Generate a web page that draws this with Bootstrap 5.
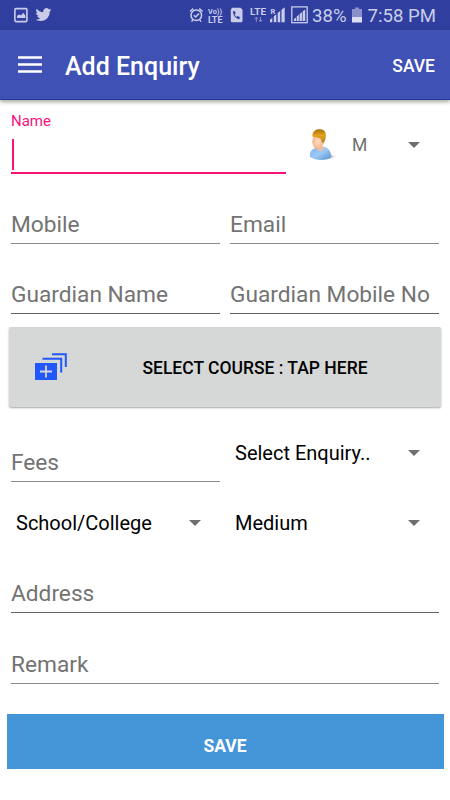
<!DOCTYPE html>
<html lang="en">
<head>
<meta charset="utf-8">
<meta name="viewport" content="width=device-width, initial-scale=1">
<title>Add Enquiry</title>
<link href="https://cdn.jsdelivr.net/npm/bootstrap@5.3.0/dist/css/bootstrap.min.css" rel="stylesheet">
<style>
body{font-family:Roboto,"Liberation Sans",sans-serif;background:#fff;color:#000;width:450px;height:800px;overflow:hidden}
svg{display:block;flex:none}
.status-bar{height:30px;background:#303f9f;color:#c9cdea;font-size:18.6px;line-height:30px;padding:0 14px 0 13px}
.status-text{padding-top:2px}
.battery{margin:0 5px 0 4px}
.app-bar{height:70px;background:#3f51b5;border-bottom:1px solid #1f3aa0;box-shadow:0 2px 4px rgba(60,60,30,.45);padding:1px 15px 0 18px}
.app-title{font-size:25px;line-height:30px;margin-left:23px;font-weight:500;padding-top:3px}
.app-action{font-size:17.5px;line-height:24px;font-weight:500;padding-top:1px}
.form-body{padding:0 11px}
.line-field{border-bottom:1px solid #8a8a8a;font-size:22.7px;line-height:26px;color:#737373;padding-bottom:5px}
.thin-line{border-bottom:1px solid #626262}
.name-field{width:275px;height:74px;border-bottom:2px solid #f8127a;color:#f8127a;font-size:15px;line-height:18px;padding-top:12px}
.caret{width:2px;height:31px;background:#f8127a;margin:9px 0 0 1px}
.name-row{height:74px}
.row-a{height:70px}
.row-b{height:70px}
.row-c{height:71px}
.row-fees{height:75px}
.row-sel{height:60px}
.row-addr{height:71px}
.half{width:209px}
.picker{font-size:20px;line-height:24px;padding:0 18px 0 5px}
.picker-type{margin-bottom:17px}
.picker-low{margin-bottom:7px}
.gender{font-size:17.5px;line-height:20px;color:#6f6f6f;padding:15px 18px 0 23px}
.gender-text{margin-left:15px}
.course-btn{width:432px;height:80px;margin:13px -2px 0;background:#d6d8d7;border:0;border-radius:2px;box-shadow:0 1px 2px rgba(0,0,0,.35);font-size:17.5px;font-weight:500;padding:0 0 0 26px}
.course-label{padding:2px 0 0 2px}
.save-btn{width:437px;height:55px;margin:30px -4.5px 0;background:#4495d7;color:#fff;border:0;border-radius:0;font-size:17.5px;font-weight:700;padding:9px 0 0}
</style>
<script src="https://cdn.jsdelivr.net/npm/bootstrap@5.3.0/dist/js/bootstrap.bundle.min.js"></script>
</head>
<body>
<header>
  <div class="status-bar d-flex align-items-center">
    <svg width="42" height="30" viewBox="0 0 42 30">
      <rect x="1.900" y="8.600" width="12" height="13" rx="1" fill="none" stroke="#c9cdea" stroke-width="1.600"/>
      <path d="M4 18v-2.200l2.300-1.400 1.800 1 2-2.600 2.300 2.800V18z" fill="#c9cdea"/>
      <path transform="translate(22 7.500) scale(.69)" fill="#c9cdea" d="M23.600 3.200c-.8.4-1.700.7-2.700.8 1-.6 1.700-1.500 2.100-2.600-.9.5-1.900.9-3 1.100A4.700 4.700 0 0 0 12 6.800C8.100 6.600 4.600 4.700 2.300 1.800c-1.200 2-.6 4.900 1.500 6.300-.8 0-1.500-.2-2.200-.6 0 2.300 1.600 4.200 3.800 4.700-.7.2-1.400.2-2.100.1.600 1.900 2.300 3.200 4.400 3.300A9.500 9.500 0 0 1 .7 17.500c2.100 1.400 4.600 2.100 7.300 2.100 8.800 0 13.600-7.300 13.300-13.900.9-.7 1.700-1.500 2.300-2.500z"/>
    </svg>
    <svg class="ms-auto" width="124" height="30" viewBox="187 0 124 30">
      <g fill="none" stroke="#c9cdea" stroke-width="1.500">
        <circle cx="195.300" cy="15.300" r="5.300"/>
        <path d="M189 11.500 192.300 8.600M198.300 8.600 201.600 11.500M191.800 19.800 190.600 21.600M198.800 19.800 200 21.600M192.800 15.300 194.700 17 198 13.600"/>
      </g>
      <g fill="#c9cdea" font-family="Roboto,sans-serif" font-weight="700">
        <text x="207" y="13.800" font-size="7.500" textLength="14" lengthAdjust="spacingAndGlyphs">Vo))</text>
        <text x="207" y="22.600" font-size="8.800" textLength="14.500" lengthAdjust="spacingAndGlyphs">LTE</text>
        <text x="249" y="15" font-size="9" textLength="16" lengthAdjust="spacingAndGlyphs">LTE</text>
        <text x="269.500" y="13.800" font-size="7.500">R</text>
      </g>
      <path d="M231 7.700h8.500l2 2V20.800a1.500 1.500 0 0 1-1.500 1.500h-8.700a1.500 1.500 0 0 1-1.500-1.500V9.700z" fill="#c9cdea"/>
      <path d="M231.900 11.200c.3 4.300 2.600 7.200 6.700 8.100v-2.500l-2-.7-1 .9c-1-.7-1.600-1.600-2-2.700l1-.9-.5-2.200z" fill="#303f9f"/>
      <path d="M255.300 22v-4.500M253.700 19l1.600-1.800 1.600 1.800M259.500 17v4.500M257.900 20l1.600 1.800 1.600-1.800" fill="none" stroke="#8890c9" stroke-width="1"/>
      <path d="M269 22.300v-2.700l2.300-1.700v4.400zM272.800 22.300v-6l2.500-2v8zM276.700 22.300V13l2.500-2v11.300zM280.500 22.300V9.700l3.200-2.400v15z" fill="#c9cdea"/>
      <rect x="290.800" y="6.900" width="15.400" height="15.800" fill="none" stroke="#c9cdea" stroke-width="1.300"/>
      <path d="M293 21v-2l2-1.500V21zM295.700 21v-4.500l2.200-1.700V21zM298.600 21v-7l2.300-1.700V21zM301.600 21v-9.500l2.600-2V21z" fill="#c9cdea"/>
    </svg>
    <span class="status-text">38%</span>
    <svg class="battery" width="12" height="30" viewBox="0 0 12 30"><path d="M1 9h3V7.500h4V9h3v8H1z" fill="#8991ca"/><path d="M1 17h10v5.500H1z" fill="#dcdff3"/></svg>
    <span class="status-text">7:58 PM</span>
  </div>
  <div class="app-bar d-flex align-items-center text-white">
    <svg width="24" height="18" viewBox="0 0 24 18"><path d="M0 1.500h24M0 8.500h24M0 15.500h24" stroke="#fff" stroke-width="2.500"/></svg>
    <div class="app-title">Add Enquiry</div>
    <div class="app-action ms-auto">SAVE</div>
  </div>
</header>
<main class="form-body">
  <div class="name-row d-flex">
    <div class="name-field">Name<div class="caret"></div></div>
    <div class="gender d-flex align-items-center flex-grow-1">
      <svg width="28" height="34" viewBox="0 0 28 34">
        <defs>
          <linearGradient id="hair" x1="0" y1="0" x2="0" y2="1"><stop offset="0" stop-color="#a86c08"/><stop offset=".45" stop-color="#e0a51c"/><stop offset="1" stop-color="#b87b16"/></linearGradient>
          <radialGradient id="face"><stop offset="0" stop-color="#ffdcbf"/><stop offset="1" stop-color="#f3b58e"/></radialGradient>
          <linearGradient id="shirt" x1="0" y1="0" x2="1" y2="1"><stop offset="0" stop-color="#79aee9"/><stop offset=".5" stop-color="#9ccaf8"/><stop offset="1" stop-color="#5b91cb"/></linearGradient>
          <radialGradient id="shade"><stop offset="0" stop-color="#777"/><stop offset="1" stop-color="#fff" stop-opacity="0"/></radialGradient>
        </defs>
        <ellipse cx="20" cy="28.500" rx="8" ry="3.500" fill="url(#shade)"/>
        <path d="M1 29c-.6-4 .8-7.500 4.500-8.600l4-2.400 7 1.200c4 1.500 5.800 5.500 5.700 10C19 32.800 7 33 1 29z" fill="url(#shirt)"/>
        <path d="M8 19h6c1.500 2-.5 4-2.500 4S8.500 22 8 19z" fill="#f2bd98"/>
        <ellipse cx="9" cy="13.500" rx="5.800" ry="7.700" fill="url(#face)"/>
        <path d="M3.300 8.500C3.300 3 7 .8 11 1.200c5 .3 6.500 4 5.700 8.300-.3 3-1.300 4.500-2.700 5.700-1.300-1.500-1.700-2.700-1.900-4.500C9.500 9.500 6 9 3.300 8.500z" fill="url(#hair)"/>
      </svg>
      <span class="gender-text">M</span>
      <svg class="ms-auto" width="14" height="8" viewBox="0 0 14 8"><path d="M1 1h12L7 7z" fill="#6f6f6f"/></svg>
    </div>
  </div>
  <div class="row-a d-flex justify-content-between align-items-end"><div class="half line-field">Mobile</div><div class="half line-field">Email</div></div>
  <div class="row-b d-flex justify-content-between align-items-end"><div class="half line-field thin-line">Guardian Name</div><div class="half line-field thin-line">Guardian Mobile No</div></div>
  <button type="button" class="course-btn d-flex align-items-center">
    <svg width="32" height="28" viewBox="0 0 32 28"><path d="M0 10h22v17H0z" fill="#2257ff"/><path d="M7.500 5.800h18.700v13.700M17 1.200h13.800V14" fill="none" stroke="#2257ff" stroke-width="2"/><path d="M5 18.500h12M11 12.500v12" stroke="#d6d8d7" stroke-width="1.800"/></svg>
    <span class="course-label flex-grow-1 text-center">SELECT COURSE : TAP HERE</span>
  </button>
  <div class="row-fees d-flex justify-content-between align-items-end">
    <div class="half line-field">Fees</div>
    <div class="half picker picker-type d-flex align-items-center justify-content-between">Select Enquiry..<svg width="14" height="8" viewBox="0 0 14 8"><path d="M1 1h12L7 7z" fill="#6f6f6f"/></svg></div>
  </div>
  <div class="row-sel d-flex justify-content-between align-items-end">
    <div class="half picker picker-low d-flex align-items-center justify-content-between">School/College<svg width="14" height="8" viewBox="0 0 14 8"><path d="M1 1h12L7 7z" fill="#6f6f6f"/></svg></div>
    <div class="half picker picker-low d-flex align-items-center justify-content-between">Medium<svg width="14" height="8" viewBox="0 0 14 8"><path d="M1 1h12L7 7z" fill="#6f6f6f"/></svg></div>
  </div>
  <div class="row-addr d-flex align-items-end"><div class="w-100 line-field thin-line">Address</div></div>
  <div class="row-c d-flex align-items-end"><div class="w-100 line-field">Remark</div></div>
  <button type="button" class="save-btn d-flex align-items-center justify-content-center">SAVE</button>
</main>
</body>
</html>
